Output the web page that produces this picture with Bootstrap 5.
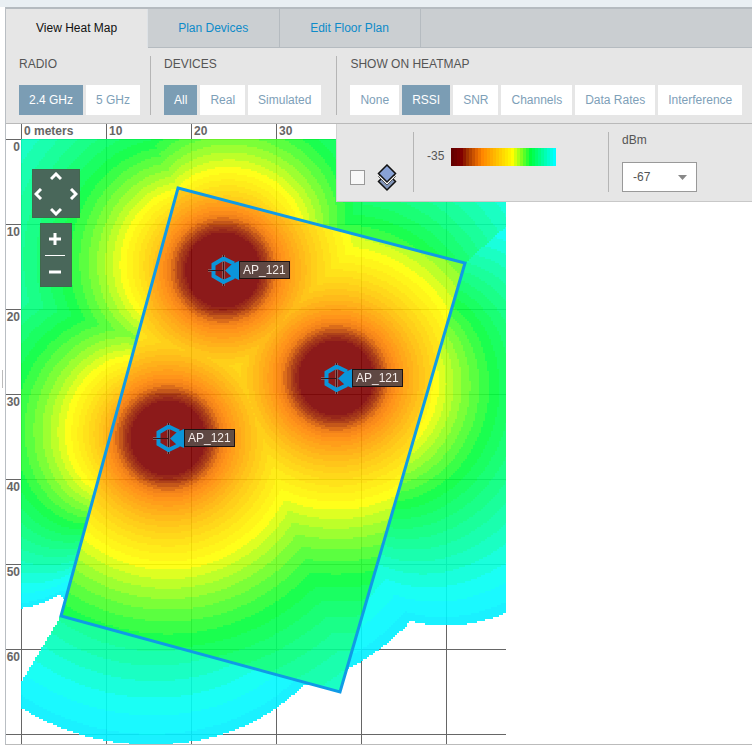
<!DOCTYPE html>
<html lang="en">
<head>
<meta charset="utf-8">
<meta name="viewport" content="width=device-width, initial-scale=1">
<title>Heat Map</title>
<link href="https://cdn.jsdelivr.net/npm/bootstrap@5.3.0/dist/css/bootstrap.min.css" rel="stylesheet">
<style>
body { font-family: "Liberation Sans", Arial, sans-serif; font-size: 12px; line-height: 16px; color: #555; background: #fff; }
.top-strip { height: 7px; background: #e9eff3; }
.shell { margin-left: 5px; border-left: 1px solid #b9bec3; border-top: 2px solid #b5bbc0; min-height: calc(100vh - 7px); border-bottom: 1px solid #bbb; }
.plan-tabs { background: #caced1; border-bottom: 1px solid #b5bbc0; height: 39px; }
.plan-tabs .nav-link { height: 39px; border: 0; border-right: 1px solid #b5bbc0; border-bottom: 1px solid #b5bbc0; border-radius: 0; margin: 0; padding: 11px 31px 11px 30px; color: #0d8bc9; background: #cbcfd2; }
.plan-tabs .nav-link.active { background: #e6e6e6; color: #111; border-bottom-color: #e6e6e6; padding-right: 30px; }
.tools { background: #e6e6e6; padding: 8px 0; border-bottom: 1px solid #b9b9b9; }
.tool-group { padding: 0 15px 0 13px; border-left: 1px solid #b5b5b5; height: 59px; }
.tool-group:first-child { border-left: 0; padding-right: 10px; }
.tool-group:last-child { padding-right: 0; }
.tool-group h2 { font-size: 12px; line-height: 16px; margin: 0 0 13px; font-weight: 400; color: #555; }
.seg { gap: 3px; }
.btn-seg { --bs-btn-font-size: 12px; --bs-btn-line-height: 16px; --bs-btn-padding-x: 10px; --bs-btn-padding-y: 7px; --bs-btn-border-radius: 0; --bs-btn-border-width: 0; --bs-btn-color: #7ea0b8; --bs-btn-bg: #fff; --bs-btn-active-bg: #7b9db4; --bs-btn-active-color: #fff; white-space: nowrap; }
.map-area { position: relative; }
.floor-map { display: block; width: 500px; height: 620px; }
.scale-text { font-size: 12px; font-weight: 700; fill: #666; }
.ap-name { font-size: 12px; fill: #f4ecea; }
.heat-layer { position: absolute; left: 15px; top: 15px; opacity: .9; }
.over-layer { position: absolute; left: 0; top: 0; }
.options { position: absolute; right: 0; top: 0; left: 330px; height: 78px; background: #e6e6e6; border-left: 1px solid #d2d2d2; border-bottom: 1px solid #c8c8c8; padding: 8px 0 0 13px; }
.options .form-check-input { width: 15px; height: 15px; border-radius: 0; border: 1px solid #999; margin: 0 0 7px; background-color: #f8f8f8; }
.opt-cell { height: 60px; }
.opt-layers { width: 63px; gap: 12px; }
.opt-line { border-left: 1px solid #b5b5b5; padding-left: 13px; }
.opt-scale { width: 195px; gap: 7px; padding-top: 16px; }
.level { width: 75px; height: 30px; border: 1px solid #999; border-radius: 0; font-size: 12px; padding: 0 10px; color: #555; background-position: right 9px center; background-size: 9px 5px; background-image: url("data:image/svg+xml,%3csvg xmlns='http://www.w3.org/2000/svg' viewBox='0 0 9 5'%3e%3cpath fill='%23888' d='M0 0h9L4.5 5z'/%3e%3c/svg%3e"); }
.map-btns { position: absolute; background: #49675a; border: 1px solid #3f6a4c; }
.map-btns button { border: 0; background: transparent; padding: 0; line-height: 0; }
.map-btns svg { fill: none; stroke: #fff; stroke-width: 3; }
.pan-pad { left: 26px; top: 45px; width: 48px; height: 49px; padding: 2px 1px 1px; }
.zoom-pad { left: 34px; top: 99px; width: 32px; height: 64px; padding-right: 2px; }
.zoom-pad button { height: 30px; width: 100%; }
.zoom-pad .rule { width: 20px; height: 1px; background: #fff; margin: 1px auto; }
.grip { position: absolute; left: 2px; top: 370px; width: 1px; height: 18px; background: #bbb; }
</style>
<script src="https://cdn.jsdelivr.net/npm/bootstrap@5.3.0/dist/js/bootstrap.bundle.min.js"></script>
</head>
<body class="overflow-hidden">
<div class="top-strip"></div>
<div class="grip"></div>
<main class="shell">
  <nav class="nav nav-tabs plan-tabs" aria-label="Map views">
    <a class="nav-link active" href="#">View Heat Map</a>
    <a class="nav-link" href="#">Plan Devices</a>
    <a class="nav-link" href="#">Edit Floor Plan</a>
  </nav>
  <div class="tools d-flex">
    <section class="tool-group">
      <h2>RADIO</h2>
      <div class="d-flex seg"><button class="btn btn-seg active">2.4 GHz</button><button class="btn btn-seg">5 GHz</button></div>
    </section>
    <section class="tool-group">
      <h2>DEVICES</h2>
      <div class="d-flex seg"><button class="btn btn-seg active">All</button><button class="btn btn-seg">Real</button><button class="btn btn-seg">Simulated</button></div>
    </section>
    <section class="tool-group">
      <h2>SHOW ON HEATMAP</h2>
      <div class="d-flex seg"><button class="btn btn-seg">None</button><button class="btn btn-seg active">RSSI</button><button class="btn btn-seg">SNR</button><button class="btn btn-seg">Channels</button><button class="btn btn-seg">Data Rates</button><button class="btn btn-seg">Interference</button></div>
    </section>
  </div>
  <div class="map-area">
    <svg class="floor-map" viewBox="6 124 500 620">
      <path d="M21.500 124V744M106.500 124V744M191.500 124V744M276.500 124V744M361.500 124V744M446.500 124V744M6 139.500H506M6 224.500H506M6 309.500H506M6 394.500H506M6 479.500H506M6 564.500H506M6 649.500H506M6 734.500H506" stroke="#666" fill="none"/>
      <g class="scale-text">
        <text x="24" y="135">0 meters</text><text x="109" y="135">10</text><text x="194" y="135">20</text><text x="279" y="135">30</text>
        <g text-anchor="end"><text x="20" y="151">0</text><text x="20" y="236">10</text><text x="20" y="321">20</text><text x="20" y="406">30</text><text x="20" y="491">40</text><text x="20" y="576">50</text><text x="20" y="661">60</text></g>
      </g>
    </svg>
    <canvas class="heat-layer" id="heat" width="485" height="605"></canvas>
    <svg class="floor-map over-layer" viewBox="6 124 500 620">
      <defs>
        <g id="ap">
          <path d="M-15 .5H-10M.5 -15V16" stroke="#8f8080" stroke-opacity=".6" stroke-width="3" fill="none"/>
          <path d="M11 -6.500L.5 -11.500L-9.500 -5.500V6L.5 12L11 7" fill="none" stroke="#0b95d9" stroke-width="4"/>
          <path d="M2 .5L9 -6L16 -9V10L9 7Z" fill="#0b95d9"/>
          <path d="M-15 .5H1M.5 -15V-13M.5 -8V9M.5 14V16" stroke="#3a1418" fill="none"/>
          <rect x="16.500" y="-8.500" width="50" height="17" fill="#5c4a46" fill-opacity=".95" stroke="#1c1212"/>
          <text class="ap-name" x="20" y="4">AP_121</text>
        </g>
      </defs>
      <path d="M178 188L465 263L340 692L61 616Z" fill="none" stroke="#0f9be6" stroke-width="3"/>
      <use href="#ap" x="223" y="270"/><use href="#ap" x="336" y="378"/><use href="#ap" x="168" y="438"/>
    </svg>
    <div class="map-btns pan-pad d-flex flex-column justify-content-between align-items-center">
      <button aria-label="Pan up"><svg width="12" height="9"><path d="M1 7L6 2L11 7"/></svg></button>
      <div class="d-flex justify-content-between w-100">
        <button aria-label="Pan left"><svg width="9" height="12"><path d="M7 1L2 6L7 11"/></svg></button>
        <button aria-label="Pan right"><svg width="9" height="12"><path d="M2 1L7 6L2 11"/></svg></button>
      </div>
      <button aria-label="Pan down"><svg width="12" height="9"><path d="M1 2L6 7L11 2"/></svg></button>
    </div>
    <div class="map-btns zoom-pad">
      <button aria-label="Zoom in"><svg width="12" height="12"><path d="M0 6H12M6 0V12"/></svg></button>
      <div class="rule"></div>
      <button aria-label="Zoom out"><svg width="12" height="12"><path d="M0 6H12"/></svg></button>
    </div>
    <div class="options d-flex">
      <div class="opt-cell opt-layers d-flex align-items-end">
        <input class="form-check-input" type="checkbox" aria-label="Show layers">
        <svg width="20" height="28" viewBox="0 0 20 28" stroke="#111" stroke-width="1.500">
          <path d="M10 9L18.500 17.500L10 26L1.500 17.500Z" fill="#8295b8"/>
          <path d="M1.500 12.500L10 21L18.500 12.500L10 5Z" fill="#fff" stroke="#555" stroke-width="1"/>
          <path d="M10 1L18.500 9.500L10 18L1.500 9.500Z" fill="#88a2d6"/>
        </svg>
      </div>
      <div class="opt-cell opt-line opt-scale d-flex align-items-start">
        <span>-35</span><canvas id="legend" width="105" height="18"></canvas>
      </div>
      <div class="opt-cell opt-line d-flex flex-column justify-content-between align-items-start">
        <label for="level">dBm</label>
        <select class="form-select level" id="level"><option>-67</option></select>
      </div>
    </div>
  </div>
</main>
<script>
const aps = [[223, 270], [336, 378], [168, 438]];
const walls = [[178, 188], [465, 263], [340, 692], [61, 616]];
const heatStops = [[1,127,0,0],[4,165,45,0],[7,240,115,0],[8.5,255,132,0],[20,255,255,0],[27,0,255,60],[32.5,0,255,175],[35.4,0,255,255],[37,0,240,255]];
const legendStops = [[0,100,0,0],[3,128,0,0],[5,160,50,0],[8,225,100,0],[10,255,135,0],[20,255,255,0],[26,0,255,60],[34,0,255,255]];
function shade(stops, i) {
  const first = stops[0], last = stops[stops.length - 1];
  i = Math.min(last[0], Math.max(first[0], i));
  let k = 1;
  while (stops[k][0] < i) k++;
  const a = stops[k - 1], b = stops[k], t = (i - a[0]) / (b[0] - a[0]);
  return `rgb(${[1, 2, 3].map(n => Math.round(a[n] + (b[n] - a[n]) * t))})`;
}
// wall loss grows with the slant of the ray through the wall
function reach(ap, x, y) {
  const dx = x - ap[0], dy = y - ap[1], d = Math.hypot(dx, dy);
  let loss = 0;
  walls.forEach((p, n) => {
    const q = walls[(n + 1) % 4], wx = q[0] - p[0], wy = q[1] - p[1];
    const cr = dx * wy - dy * wx;
    if (!cr) return;
    const ex = p[0] - ap[0], ey = p[1] - ap[1];
    const t = (ex * wy - ey * wx) / cr, u = (ex * dy - ey * dx) / cr;
    if (t > 0 && t < 1 && u >= 0 && u <= 1) loss += .24 * Math.min(3, d * Math.hypot(wx, wy) / Math.abs(cr));
  });
  return d * Math.exp(loss);
}
const cx = document.getElementById('heat').getContext('2d');
for (let y = 0; y < 605; y += 2) for (let x = 0; x < 485; x += 2) {
  const D = Math.min(...aps.map(a => reach(a, x + 22, y + 140)));
  if (D > 393) continue;
  cx.fillStyle = shade(heatStops, Math.floor(Math.log(Math.max(D, 1) / 33) / .066));
  cx.fillRect(x, y, 2, 2);
}
const lx = document.getElementById('legend').getContext('2d');
for (let i = 0; i < 35; i++) {
  lx.fillStyle = shade(legendStops, i);
  lx.fillRect(i * 3, 0, 3, 18);
}
</script>
</body>
</html>
